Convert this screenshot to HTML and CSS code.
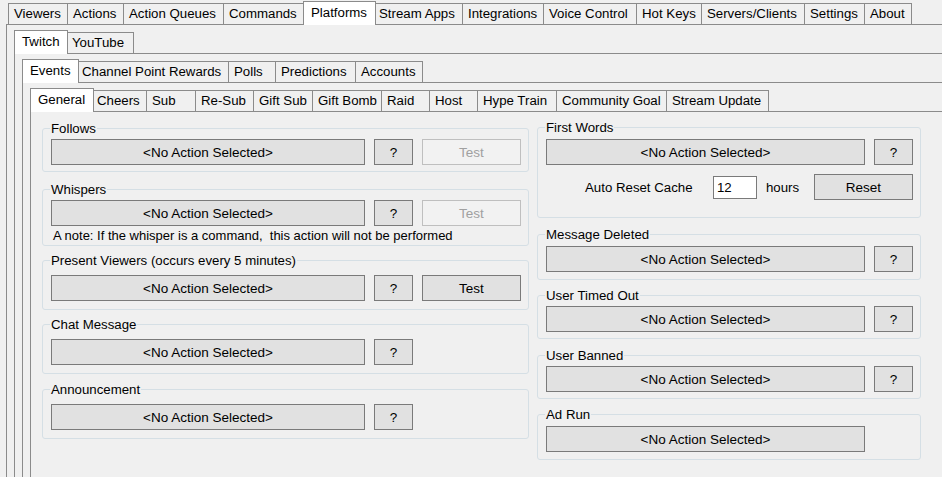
FILE: index.html
```html
<!DOCTYPE html>
<html lang="en">
<head>
<meta charset="utf-8">
<title>Platforms - Twitch Events</title>
<link rel="stylesheet" href="styles.css">
</head>
<body>
<div class="tc tc-top">
  <div class="strip s1">
    <div class="tab">Viewers</div>
    <div class="tab">Actions</div>
    <div class="tab">Action Queues</div>
    <div class="tab">Commands</div>
    <div class="tab sel">Platforms</div>
    <div class="tab">Stream Apps</div>
    <div class="tab">Integrations</div>
    <div class="tab">Voice Control</div>
    <div class="tab">Hot Keys</div>
    <div class="tab">Servers/Clients</div>
    <div class="tab">Settings</div>
    <div class="tab">About</div>
  </div>
  <div class="page">
    <div class="tc">
      <div class="strip s2">
        <div class="tab sel">Twitch</div>
        <div class="tab">YouTube</div>
      </div>
      <div class="page">
        <div class="tc">
          <div class="strip s3">
            <div class="tab sel">Events</div>
            <div class="tab">Channel Point Rewards</div>
            <div class="tab">Polls</div>
            <div class="tab">Predictions</div>
            <div class="tab">Accounts</div>
          </div>
          <div class="page">
            <div class="tc">
              <div class="strip s4">
                <div class="tab sel">General</div>
                <div class="tab">Cheers</div>
                <div class="tab">Sub</div>
                <div class="tab">Re-Sub</div>
                <div class="tab">Gift Sub</div>
                <div class="tab">Gift Bomb</div>
                <div class="tab">Raid</div>
                <div class="tab">Host</div>
                <div class="tab">Hype Train</div>
                <div class="tab">Community Goal</div>
                <div class="tab">Stream Update</div>
              </div>
              <div class="page page-inner">
                <div class="cols">
                  <div class="col col-left">
                    <div class="group mt16">
                      <div class="gtitle">Follows</div>
                      <div class="row">
                        <div class="btn act">&lt;No Action Selected&gt;</div>
                        <div class="btn q">?</div>
                        <div class="btn test dis">Test</div>
                      </div>
                    </div>
                    <div class="group g-note mt17">
                      <div class="gtitle">Whispers</div>
                      <div class="row">
                        <div class="btn act">&lt;No Action Selected&gt;</div>
                        <div class="btn q">?</div>
                        <div class="btn test dis">Test</div>
                      </div>
                      <div class="note">A note: If the whisper is a command,&nbsp; this action will not be performed</div>
                    </div>
                    <div class="group g-tall mt14">
                      <div class="gtitle">Present Viewers (occurs every 5 minutes)</div>
                      <div class="row">
                        <div class="btn act">&lt;No Action Selected&gt;</div>
                        <div class="btn q">?</div>
                        <div class="btn test">Test</div>
                      </div>
                    </div>
                    <div class="group g-tall mt14">
                      <div class="gtitle">Chat Message</div>
                      <div class="row">
                        <div class="btn act">&lt;No Action Selected&gt;</div>
                        <div class="btn q">?</div>
                      </div>
                    </div>
                    <div class="group g-tall mt15">
                      <div class="gtitle">Announcement</div>
                      <div class="row">
                        <div class="btn act">&lt;No Action Selected&gt;</div>
                        <div class="btn q">?</div>
                      </div>
                    </div>
                  </div>
                  <div class="col col-right">
                    <div class="group g-fw mt15">
                      <div class="gtitle">First Words</div>
                      <div class="row">
                        <div class="btn act-wide">&lt;No Action Selected&gt;</div>
                        <div class="btn q">?</div>
                      </div>
                      <div class="row2">
                        <div class="lbl">Auto Reset Cache</div>
                        <div class="tbox">12</div>
                        <div class="hours">hours</div>
                        <div class="btn reset">Reset</div>
                      </div>
                    </div>
                    <div class="group g-r mt16">
                      <div class="gtitle">Message Deleted</div>
                      <div class="row">
                        <div class="btn act-wide">&lt;No Action Selected&gt;</div>
                        <div class="btn q">?</div>
                      </div>
                    </div>
                    <div class="group mt15">
                      <div class="gtitle">User Timed Out</div>
                      <div class="row">
                        <div class="btn act-wide">&lt;No Action Selected&gt;</div>
                        <div class="btn q">?</div>
                      </div>
                    </div>
                    <div class="group mt16">
                      <div class="gtitle">User Banned</div>
                      <div class="row">
                        <div class="btn act-wide">&lt;No Action Selected&gt;</div>
                        <div class="btn q">?</div>
                      </div>
                    </div>
                    <div class="group g-r mt15">
                      <div class="gtitle">Ad Run</div>
                      <div class="row">
                        <div class="btn act-wide">&lt;No Action Selected&gt;</div>
                      </div>
                    </div>
                  </div>
                </div>
              </div>
            </div>
          </div>
        </div>
      </div>
    </div>
  </div>
</div>
</body>
</html>
```

FILE: styles.css
```css
* { box-sizing: border-box; }
html, body { margin: 0; padding: 0; }
body {
  width: 942px;
  height: 477px;
  overflow: hidden;
  background: #f0f0f0;
  font-family: "Liberation Sans", Arial, sans-serif;
  font-size: 13.25px;
  color: #000;
}

/* Tab controls */
.tc { display: flex; flex-direction: column; flex: 1; min-width: 0; min-height: 0; }
.tc-top { margin: 1px 0 0 6px; width: 936px; height: 476px; flex: none; overflow: hidden; }
.strip {
  display: flex;
  align-items: flex-end;
  height: 23px;
  padding-left: 2px;
  flex: none;
}
.tab {
  flex: none;
  height: 21px;
  border: 1px solid #8b8b8b;
  border-bottom: none;
  margin-right: -1px;
  padding: 0 0 0 5px;
  line-height: 20px;
  white-space: nowrap;
  overflow: hidden;
  background: #f0f0f0;
}
.tab.sel {
  height: 24px;
  margin: 0 -3px -1px -2px;
  padding: 1px 0 0 7px;
  background: #fff;
  position: relative;
  z-index: 1;
}
.page {
  flex: 1;
  min-width: 0;
  min-height: 0;
  display: flex;
  flex-direction: column;
  border-top: 1px solid #8b8b8b;
  border-left: 1px solid #8b8b8b;
  padding: 5px 0 0 7px;
}
.page-inner { padding: 0 0 0 11px; }

/* tab widths (outer, borders included) */
.s1 .tab:nth-child(1) { width: 60px; }
.s1 .tab:nth-child(2) { width: 57px; }
.s1 .tab:nth-child(3) { width: 101px; }
.s1 .tab:nth-child(4) { width: 83px; }
.s1 .tab:nth-child(5) { width: 73px; }
.s1 .tab:nth-child(6) { width: 90px; }
.s1 .tab:nth-child(7) { width: 82px; }
.s1 .tab:nth-child(8) { width: 94px; }
.s1 .tab:nth-child(9) { width: 66px; }
.s1 .tab:nth-child(10) { width: 104px; }
.s1 .tab:nth-child(11) { width: 61px; }
.s1 .tab:nth-child(12) { width: 48px; }

.s2 .tab:nth-child(1) { width: 54px; }
.s2 .tab:nth-child(2) { width: 69px; padding-left: 6px; }

.s3 .tab:nth-child(1) { width: 57px; }
.s3 .tab:nth-child(2) { width: 153px; }
.s3 .tab:nth-child(3) { width: 48px; }
.s3 .tab:nth-child(4) { width: 81px; }
.s3 .tab:nth-child(5) { width: 68px; }

.s4 .tab:nth-child(1) { width: 64px; }
.s4 .tab:nth-child(2) { width: 56px; }
.s4 .tab:nth-child(3) { width: 50px; }
.s4 .tab:nth-child(4) { width: 59px; }
.s4 .tab:nth-child(5) { width: 60px; }
.s4 .tab:nth-child(6) { width: 70px; }
.s4 .tab:nth-child(7) { width: 49px; }
.s4 .tab:nth-child(8) { width: 49px; }
.s4 .tab:nth-child(9) { width: 80px; }
.s4 .tab:nth-child(10) { width: 111px; }
.s4 .tab:nth-child(11) { width: 103px; }

/* Content columns */
.cols { display: flex; gap: 8px; align-items: flex-start; }
.col { display: flex; flex-direction: column; flex: none; }
.col-left { width: 487px; }
.col-right { width: 384px; }

.mt14 { margin-top: 14px; }
.mt15 { margin-top: 15px; }
.mt16 { margin-top: 16px; }
.mt17 { margin-top: 17px; }

/* Group boxes */
.group {
  border: 1px solid #d5dfe5;
  border-radius: 3px;
  padding: 0 7px 6px 8px;
}
.gtitle {
  width: fit-content;
  line-height: 15px;
  margin: -8px 0 3px -1px;
  padding: 0 1px;
  background: #f0f0f0;
  white-space: nowrap;
}
.g-tall { padding-bottom: 8px; }
.g-tall .gtitle { margin-bottom: 7px; }
.g-r { padding-bottom: 7px; }
.g-r .gtitle { margin-bottom: 4px; }
.g-fw { padding-bottom: 17px; }
.g-fw .gtitle { margin-bottom: 4px; }
.g-note { padding-bottom: 2px; }

.row { display: flex; gap: 9px; }
.btn {
  flex: none;
  height: 26px;
  border: 1px solid #7a7a7a;
  background: #e1e1e1;
  display: flex;
  align-items: center;
  justify-content: center;
  white-space: nowrap;
  padding-top: 1px;
  font-size: 13.5px;
}
.act { width: 314px; }
.act-wide { width: 319px; }
.q { width: 39px; }
.test { width: 99px; }
.btn.dis {
  border-color: #bfbfbf;
  background: #f2f2f2;
  color: #a0a0a0;
}

.note {
  margin-top: 2px;
  line-height: 15px;
  padding-left: 2px;
  white-space: nowrap;
  font-size: 13px;
}

.row2 {
  display: flex;
  align-items: center;
  margin-top: 9px;
  padding-left: 39px;
}
.lbl { width: 128px; white-space: nowrap; }
.tbox {
  width: 44px;
  height: 23px;
  border: 1px solid #7a7a7a;
  background: #fff;
  padding-left: 3px;
  line-height: 21px;
}
.hours { margin-left: 9px; }
.reset { width: 99px; margin-left: auto; }
```
